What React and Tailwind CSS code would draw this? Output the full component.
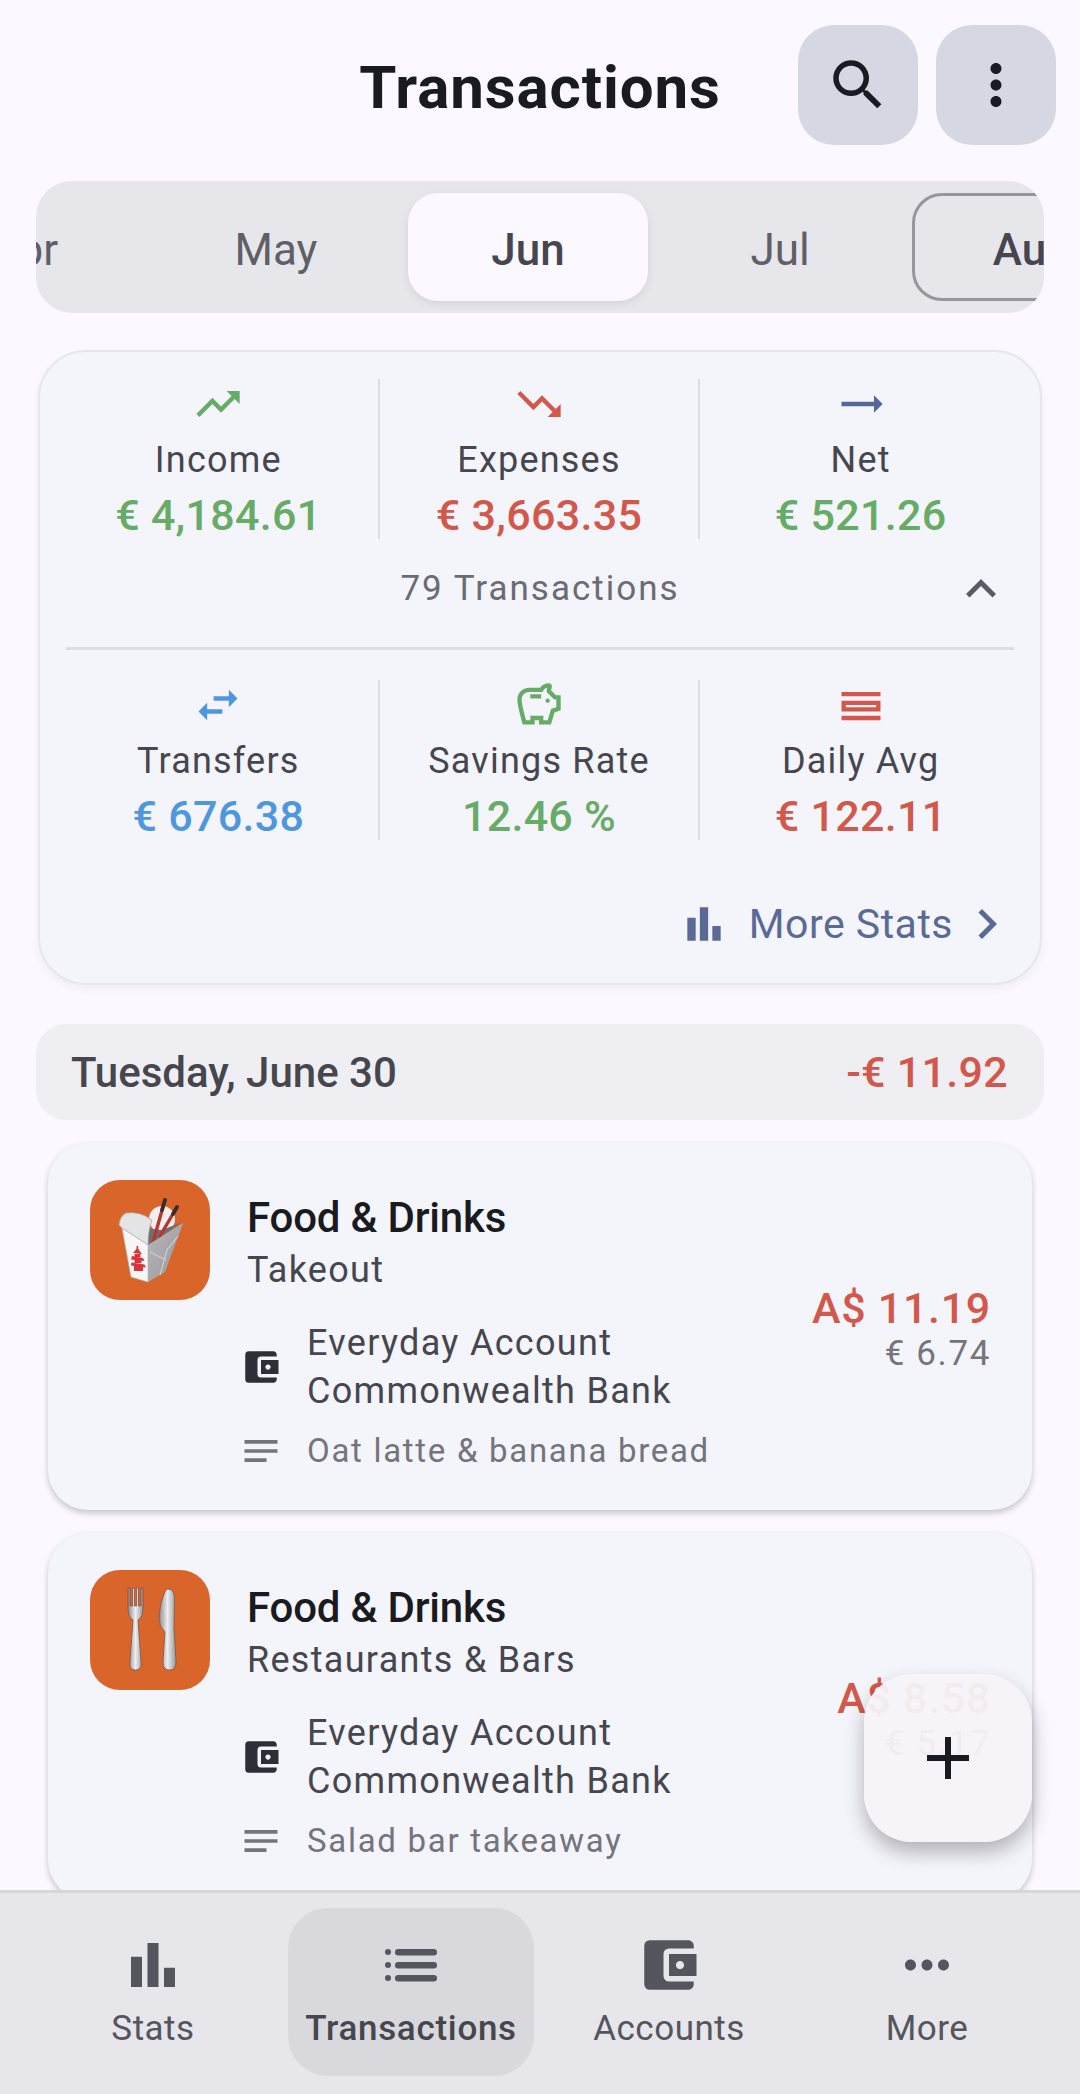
import React from 'react';
import {
    MdSearch, MdMoreVert, MdMoreHoriz, MdTrendingUp, MdTrendingDown, MdTrendingFlat, MdSwapHoriz,
    MdOutlineSavings, MdOutlineCalendarViewDay, MdBarChart, MdChevronRight, MdKeyboardArrowUp,
    MdAccountBalanceWallet, MdNotes, MdAdd
} from 'react-icons/md';

const FONT = "font-['Roboto','Noto_Sans',sans-serif]";

const months = [
    { label: 'Apr' },
    { label: 'May' },
    { label: 'Jun', selected: true },
    { label: 'Jul' },
    { label: 'Aug', current: true },
];

const topStats = [
    { icon: MdTrendingUp, iconColor: 'text-[#66ab66]', label: 'Income', value: '€ 4,184.61', valueColor: 'text-[#66ab66]' },
    { icon: MdTrendingDown, iconColor: 'text-[#d2584c]', label: 'Expenses', value: '€ 3,663.35', valueColor: 'text-[#d2584c]' },
    { icon: MdTrendingFlat, iconColor: 'text-[#54689b]', label: 'Net', value: '€ 521.26', valueColor: 'text-[#66ab66]' },
];

const bottomStats = [
    { icon: MdSwapHoriz, iconColor: 'text-[#4f97dd]', label: 'Transfers', value: '€ 676.38', valueColor: 'text-[#4f97dd]' },
    { icon: MdOutlineSavings, iconColor: 'text-[#66ab66]', label: 'Savings Rate', value: '12.46 %', valueColor: 'text-[#66ab66]' },
    { icon: MdOutlineCalendarViewDay, iconColor: 'text-[#d2584c]', label: 'Daily Avg', value: '€ 122.11', valueColor: 'text-[#d2584c]' },
];

const StatRow = ({ stats }) => (
    <div className="grid grid-cols-3 mx-[19px]">
        {stats.map((stat, i) => {
            const Icon = stat.icon;
            return (
                <div key={stat.label} className={`h-[160px] flex flex-col items-center ${i < 2 ? 'border-r-2 border-[#dcdce1]' : ''}`}>
                    <div className={`${stat.iconColor} h-[50px] mb-[4px] flex items-center justify-center`}><Icon size={52} /></div>
                    <div className="text-[36px] leading-[55px] tracking-[1.2px] text-[#46464f]">{stat.label}</div>
                    <div className={`text-[43px] leading-[54px] font-medium tracking-[0.3px] ${stat.valueColor}`}>{stat.value}</div>
                </div>
            );
        })}
    </div>
);

// Take-out box with chopsticks
const TakeoutIcon = () => (
    <svg viewBox="0 0 120 120" className="w-[120px] h-[120px]">
        <defs>
            <linearGradient id="boxSide" x1="0" y1="0" x2="1" y2="1">
                <stop offset="0" stopColor="#b9b9bc" />
                <stop offset="1" stopColor="#96969a" />
            </linearGradient>
        </defs>
        {/* rice and back of the box */}
        <circle cx="72" cy="39" r="13" fill="#f2eeee" />
        <path d="M36 46 L58 66 L92 42 L72 50 Z" fill="#6f6f73" />
        {/* chopsticks */}
        <path d="M75 20 L63 62" stroke="#b5382f" strokeWidth="3.4" strokeLinecap="round" />
        <path d="M87 27 L70 56" stroke="#b5382f" strokeWidth="3.4" strokeLinecap="round" />
        <path d="M75 20 L72 30" stroke="#3c2b2b" strokeWidth="3.8" strokeLinecap="round" />
        <path d="M87 27 L83 34" stroke="#3c2b2b" strokeWidth="3.8" strokeLinecap="round" />
        {/* folded flaps */}
        <path d="M29 45 Q30 36 36 33 Q50 31 62 40 Q58 50 58 65 L32 48 Z" fill="#e4e4e6" stroke="#a8a8ab" strokeWidth="0.8" />
        <path d="M58 65 L70 58 L93 43 L88 56 L72 66 Z" fill="#9e9ea2" />
        {/* side and front faces */}
        <path d="M58 65 L93 43 L75 92 L58 102 Z" fill="url(#boxSide)" />
        <path d="M32 48 L58 65 L58 102 L41 97 Z" fill="#f6f6f6" stroke="#b4b4b7" strokeWidth="0.7" />
        <path d="M60 72 L76 80 M70 95 L77 70 L88 56" stroke="#cfcfd2" strokeWidth="1.2" fill="none" />
        {/* pagoda print */}
        <g fill="#d8343b">
            <rect x="46.6" y="66" width="1.6" height="4" />
            <path d="M47.4 68 L43 73 L52 74 Z" />
            <rect x="44.5" y="74" width="6" height="3" />
            <path d="M42 76 L53 78 L54.5 81 L41 79.5 Z" />
            <rect x="44.5" y="80" width="7" height="3" />
            <path d="M41.5 82.5 L54.5 84.5 L56 87.5 L41 85.5 Z" />
            <rect x="44" y="86" width="9" height="5" />
        </g>
    </svg>
);

// Fork and knife
const CutleryIcon = () => (
    <svg viewBox="0 0 120 120" className="w-[120px] h-[120px]">
        <defs>
            <linearGradient id="metal" x1="0" y1="0" x2="1" y2="0">
                <stop offset="0" stopColor="#8c8c90" />
                <stop offset="0.5" stopColor="#eeeef0" />
                <stop offset="1" stopColor="#97979b" />
            </linearGradient>
        </defs>
        <path d="M38 18 L38 38 Q38 47 43 50 L40 92 Q39 100 45.5 100 Q52 100 51 92 L48 50 Q53 47 53 38 L53 18 L51 18 L51 36 L48.5 36 L48.5 18 L46.5 18 L46.5 36 L44.5 36 L44.5 18 L42.5 18 L42.5 36 L40 36 L40 18 Z" fill="url(#metal)" stroke="#6e5148" strokeWidth="0.7" />
        <path d="M78 19 Q84 19 84.5 28 L84 58 L86 92 Q86 100 79.5 100 Q73 100 73 92 L75 62 Q69 56 69 49 Q70 32 75 22 Q76 19 78 19 Z" fill="url(#metal)" stroke="#6e5148" strokeWidth="0.7" />
    </svg>
);

const TransactionCard = ({ icon, subcategory, amount, converted, note }) => (
    <div className="mx-[12px] h-[367px] rounded-[40px] bg-[#f4f4fb] shadow-[0_3px_6px_rgba(0,0,0,0.22)] relative flex items-start pt-[37px] pl-[42px] pr-[44px] shrink-0">
        <div className="w-[120px] h-[120px] rounded-[30px] bg-[#d9652b] shrink-0 overflow-hidden">{icon}</div>
        <div className="ml-[37px] flex-1 min-w-0">
            <div className="text-[42px] leading-[53px] font-medium tracking-[-0.2px] text-[#1a1b20] mt-[11px]">Food &amp; Drinks</div>
            <div className="text-[36px] leading-[53px] tracking-[1.3px] text-[#46464f]">{subcategory}</div>
            <div className="flex items-center mt-[22px]">
                <MdAccountBalanceWallet size={42} className="text-[#2e2f36] -ml-[7px] mr-[25px]" />
                <div className="text-[36px] leading-[48px] tracking-[1.3px] text-[#46464f]">
                    <div>Everyday Account</div>
                    <div>Commonwealth Bank</div>
                </div>
            </div>
            <div className="flex items-center mt-[14px]">
                <MdNotes size={44} className="text-[#74747c] -ml-[8px] mr-[24px]" />
                <div className="text-[33px] leading-[44px] tracking-[1.7px] text-[#74747c]">{note}</div>
            </div>
        </div>
        <div className="absolute right-[41px] top-[141px] text-right">
            <div className="text-[43px] leading-[48px] font-medium tracking-[0.7px] text-[#d2584c]">{amount}</div>
            <div className="text-[35px] leading-[44px] tracking-[1.6px] text-[#74747c]">{converted}</div>
        </div>
    </div>
);

const navItems = [
    { label: 'Stats' },
    { label: 'Transactions', selected: true },
    { label: 'Accounts' },
    { label: 'More' },
];

const NavIcon = ({ label }) => {
    if (label === 'Stats') return <MdBarChart size={66} />;
    if (label === 'Transactions') {
        return (
            <svg viewBox="0 0 52 36" className="w-[52px] h-[36px]" fill="currentColor">
                <circle cx="3" cy="5" r="3" />
                <circle cx="3" cy="18" r="3" />
                <circle cx="3" cy="31" r="3" />
                <rect x="10" y="2" width="42" height="6.5" rx="3.2" />
                <rect x="10" y="15" width="42" height="6.5" rx="3.2" />
                <rect x="10" y="28" width="42" height="6.5" rx="3.2" />
            </svg>
        );
    }
    if (label === 'Accounts') return <MdAccountBalanceWallet size={66} />;
    return <MdMoreHoriz size={66} />;
};

export default function App() {
    return (
        <div className={`relative w-[1080px] h-[2094px] overflow-hidden flex flex-col bg-[#fbf9ff] ${FONT}`}>
            <div className="flex-1 min-h-0 overflow-hidden">
                {/* top bar */}
                <header className="relative h-[145px] pt-[25px] pr-[24px] flex justify-end gap-[18px]">
                    <h1 className="absolute left-0 right-0 top-[56px] text-center text-[60px] leading-[64px] font-bold tracking-[0.9px] text-[#1a1b20]">Transactions</h1>
                    <button className="relative w-[120px] h-[120px] rounded-[36px] bg-[#d5d8e3] flex items-center justify-center text-[#1a1b20]"><MdSearch size={66} /></button>
                    <button className="relative w-[120px] h-[120px] rounded-[36px] bg-[#d5d8e3] flex items-center justify-center text-[#1a1b20]"><MdMoreVert size={66} /></button>
                </header>

                {/* month picker */}
                <div className="mx-[36px] mt-[36px] h-[132px] rounded-[36px] bg-[#e6e6eb] overflow-hidden">
                    <div className="flex gap-[12px] pt-[12px] -ml-[132px]">
                        {months.map(m => (
                            <div
                                key={m.label}
                                className={`w-[240px] h-[108px] shrink-0 rounded-[30px] flex items-center justify-center pt-[5px] text-[44px] ${m.selected ? 'bg-[#fbf9ff] font-medium text-[#46464f] shadow-[0_3px_8px_rgba(0,0,0,0.08)]' : ''} ${m.current ? 'border-[3px] border-[#96969c] font-medium text-[#46464f]' : ''} ${!m.selected && !m.current ? 'text-[#5f5f68]' : ''}`}
                            >
                                {m.label}
                            </div>
                        ))}
                    </div>
                </div>

                {/* summary card */}
                <section className="mx-[38px] mt-[37px] h-[635px] rounded-[48px] bg-[#f4f4fb] border-2 border-[#e6e6ec] shadow-[0_4px_10px_rgba(0,0,0,0.05)] pt-[27px]">
                    <StatRow stats={topStats} />
                    <div className="relative h-[80px] flex items-center justify-center text-[35px] tracking-[2px] text-[#6b6b74] mt-[10px]">
                        79 Transactions
                        <MdKeyboardArrowUp size={60} className="absolute right-[29px] top-[10px] text-[#5a5a64]" />
                    </div>
                    <div className="mx-[26px] h-[3px] bg-[#dcdce1] mt-[18px]" />
                    <div className="mt-[29px] pt-[1px]"><StatRow stats={bottomStats} /></div>
                    <div className="flex items-center justify-end mt-[54px] pr-[23px] text-[#5a6a97]">
                        <MdBarChart size={50} className="mr-[20px]" />
                        <span className="text-[41px] leading-[57px] tracking-[0.5px] mr-[4px]">More Stats</span>
                        <MdChevronRight size={60} />
                    </div>
                </section>

                {/* day header */}
                <div className="mx-[36px] mt-[39px] h-[96px] rounded-[30px] bg-[#efeff3] flex items-center justify-between pl-[35px] pr-[36px]">
                    <span className="text-[42px] font-medium text-[#46464f] pt-[1px]">Tuesday, June 30</span>
                    <span className="text-[43px] font-medium tracking-[0.3px] text-[#d2584c]">-€ 11.92</span>
                </div>

                <div className="mt-[23px] mx-[36px] flex flex-col gap-[23px]">
                    <TransactionCard icon={<TakeoutIcon />} subcategory="Takeout" amount="A$ 11.19" converted="€ 6.74" note="Oat latte & banana bread" />
                    <TransactionCard icon={<CutleryIcon />} subcategory="Restaurants & Bars" amount="A$ 8.58" converted="€ 5.17" note="Salad bar takeaway" />
                </div>
            </div>

            {/* add button, sits over the list */}
            <button className="absolute left-[864px] top-[1674px] w-[168px] h-[168px] rounded-[48px] bg-[#f5f3f8]/95 shadow-[0_10px_20px_rgba(0,0,0,0.28)] flex items-center justify-center text-[#1a1b20]">
                <MdAdd size={72} />
            </button>

            {/* bottom navigation */}
            <nav className="h-[204px] shrink-0 bg-[#e6e6eb] border-t-[3px] border-[#d5d5da] grid grid-cols-4 px-[24px] pt-[15px]">
                {navItems.map(item => (
                    <div
                        key={item.label}
                        className={`mx-[6px] h-[168px] rounded-[40px] flex flex-col items-center text-[#55555e] ${item.selected ? 'bg-[#d8d8dd]' : ''}`}
                    >
                        <div className="h-[66px] mt-[24px] flex items-center justify-center"><NavIcon label={item.label} /></div>
                        <div className={`mt-[7px] text-[35px] leading-[48px] ${item.selected ? 'font-medium tracking-[0.7px] text-[#46464f]' : 'tracking-[0.5px]'}`}>{item.label}</div>
                    </div>
                ))}
            </nav>
        </div>
    );
}
